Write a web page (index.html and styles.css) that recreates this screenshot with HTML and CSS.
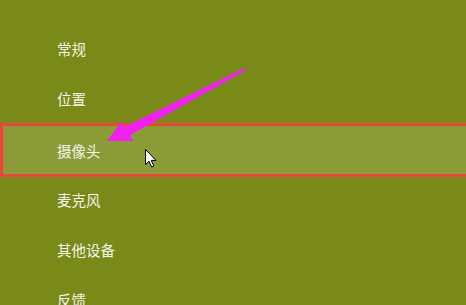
FILE: index.html
```html
<!DOCTYPE html>
<html lang="zh-CN">
<head>
    <meta charset="UTF-8">
    <title>隐私</title>
    <link rel="stylesheet" href="styles.css">
</head>
<body>
    <div id="settings">
        <ul class="menu">
            <li class="item">常规</li>
            <li class="item">位置</li>
            <li class="item active">摄像头</li>
            <li class="item">麦克风</li>
            <li class="item">其他设备</li>
            <li class="item">反馈</li>
        </ul>

        <!-- 标注箭头 -->
        <svg class="mark" width="466" height="305" viewBox="0 0 466 305">
            <polygon points="107,141 121,122 124,127 244,68 246,70 130,135 133,141" fill="#f020f0"/>
        </svg>

        <!-- 鼠标指针 -->
        <svg class="cursor" width="14" height="20" viewBox="0 0 14 20">
            <path d="M0.5 0.5 L0.5 15.5 L4 12.2 L6.6 18 L8.8 17 L6.3 11.4 L11 11.4 Z" fill="#fff" stroke="#000" stroke-width="1"/>
        </svg>
    </div>
</body>
</html>
```

FILE: styles.css
```css
html,
body {
    margin: 0;
    overflow: hidden;
}

#settings {
    position: relative;
    width: 466px;
    height: 305px;
    background-color: #7a8a18;
    font-family: "Noto Sans CJK SC", "Microsoft YaHei", sans-serif;
    overflow: hidden;
}

.menu {
    list-style: none;
    margin: 0;
    padding: 23px 0 0 0;
}

.item {
    display: flex;
    align-items: center;
    height: 50px;
    padding-left: 57px;
    font-size: 14.5px;
    color: #f4f4ea;
    box-sizing: border-box;
}

/* 选中的摄像头一栏 */
.item.active {
    width: 480px;
    height: 54px;
    margin: 0 0 -3px 0;
    padding-left: 54px;
    background-color: #8a9b38;
    border: 3px solid #e8463a;
}

.mark {
    position: absolute;
    left: 0;
    top: 0;
}

.cursor {
    position: absolute;
    left: 145px;
    top: 149px;
}
```
